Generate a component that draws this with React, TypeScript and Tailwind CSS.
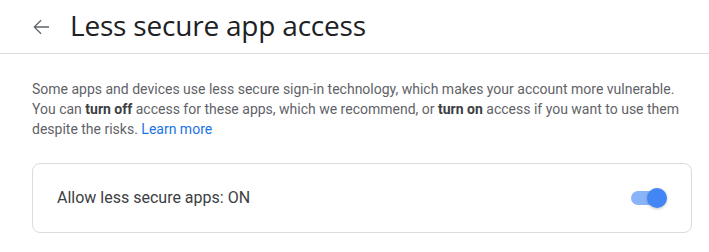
import React, { useState } from 'react';

const App: React.FC = () => {
  const [allowed, setAllowed] = useState(true);

  return (
    <div className="w-[709px] h-[252px] bg-white overflow-hidden font-['Roboto',sans-serif]">
      {/* Header */}
      <div className="flex items-center h-[54px] border-b border-[#dadce0]">
        <button className="ml-[29px] w-6 h-6 flex items-center justify-center text-[#5f6368]">
          <svg width="24" height="24" viewBox="0 0 24 24" fill="currentColor">
            <path d="M20 11.3H6.9l5.6-5.6-.9-.9L4.4 12l7.2 7.2.9-.9-5.6-5.6H20v-1.4z" />
          </svg>
        </button>
        <h1 className="ml-[17px] text-[28px] leading-none text-[#202124] font-['Open_Sans',sans-serif] tracking-[-0.2px] pb-[3px]">
          Less secure app access
        </h1>
      </div>

      {/* Body */}
      <div className="px-[32px] pt-[25px]">
        <p className="text-[14px] leading-[20px] text-[#5f6368]">
          <span className="block whitespace-nowrap">
            Some apps and devices use less secure sign-in technology, which makes your account more vulnerable.
          </span>
          <span className="block whitespace-nowrap">
            You can <b className="font-bold text-[#3c4043]">turn off</b> access for these apps, which we recommend, or{' '}
            <b className="font-bold text-[#3c4043]">turn on</b> access if you want to use them
          </span>
          <span className="block whitespace-nowrap">
            despite the risks. <a className="text-[#1a73e8]">Learn more</a>
          </span>
        </p>

        <div className="mt-[24px] w-[660px] h-[70px] border border-[#dadce0] rounded-lg flex items-center justify-between pl-[24px] pr-[24px]">
          <span className="text-[16px] text-[#3c4043]">Allow less secure apps: {allowed ? 'ON' : 'OFF'}</span>
          <button
            onClick={() => setAllowed(!allowed)}
            className="relative w-[36px] h-[20px] flex items-center"
          >
            <span className={`block w-[34px] h-[14px] rounded-full ${allowed ? 'bg-[#8ab4f8]' : 'bg-[#bdc1c6]'}`} />
            <span
              className={`absolute top-0 w-[20px] h-[20px] rounded-full shadow-[0_1px_3px_rgba(60,64,67,0.3)] ${
                allowed ? 'left-[16px] bg-[#4285f4]' : 'left-0 bg-white'
              }`}
            />
          </button>
        </div>
      </div>
    </div>
  );
};

export default App;
